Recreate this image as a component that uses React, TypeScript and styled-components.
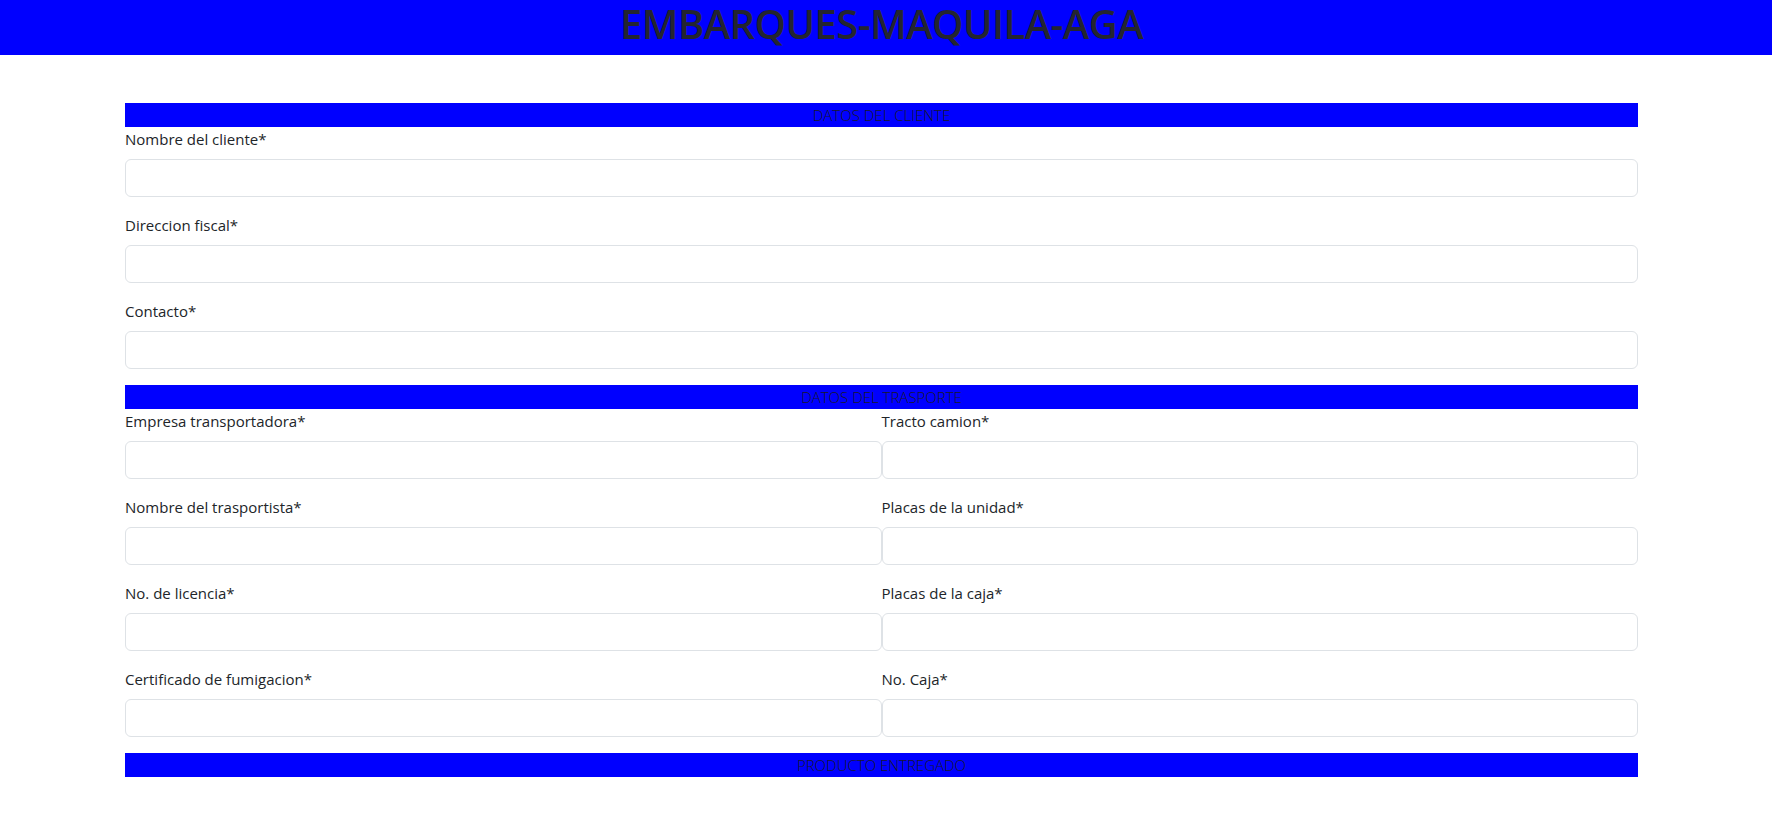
import React from "react";
import styled, { createGlobalStyle } from "styled-components";

const Global = createGlobalStyle`
  html, body { margin: 0; padding: 0; background: #fff; }
  body { font-family: "Open Sans", "Noto Sans", sans-serif; color: #212529; }
  * { box-sizing: border-box; }
`;

const Header = styled.header`
  background: #0000ff;
  padding: 0 134px 7px 125px;
`;

const Title = styled.h1`
  margin: 0;
  font-size: 40px;
  line-height: 48px;
  font-weight: 600;
  letter-spacing: -0.6px;
  text-align: center;
  color: #24252f;
`;

const Main = styled.main`
  padding: 48px 134px 40px 125px;
`;

const SectionBar = styled.div`
  height: 24px;
  background: #0000ff;
  color: #1a1a2a;
  font-size: 15px;
  font-weight: 300;
  line-height: 24px;
  text-align: center;
`;

const Grid = styled.div<{ $cols: number }>`
  display: grid;
  grid-template-columns: repeat(${(p) => p.$cols}, 1fr);
`;

const Field = styled.div`
  display: flex;
  flex-direction: column;
  margin-bottom: 16px;
`;

const Label = styled.label`
  font-size: 15px;
  line-height: 24px;
  margin-bottom: 8px;
  color: #212529;
`;

const Input = styled.input`
  height: 38px;
  width: 100%;
  border: 1px solid #dee2e6;
  border-radius: 6px;
  background: #fff;
  font: inherit;
  padding: 6px 12px;
  outline: none;
`;

const FormField = ({ label }: { label: string }) => (
  <Field>
    <Label>{label}</Label>
    <Input type="text" />
  </Field>
);

export default function App() {
  const transport = [
    "Empresa transportadora*",
    "Tracto camion*",
    "Nombre del trasportista*",
    "Placas de la unidad*",
    "No. de licencia*",
    "Placas de la caja*",
    "Certificado de fumigacion*",
    "No. Caja*",
  ];
  return (
    <>
      <Global />
      <Header>
        <Title>EMBARQUES-MAQUILA-AGA</Title>
      </Header>
      <Main>
        <SectionBar>DATOS DEL CLIENTE</SectionBar>
        <Grid $cols={1}>
          <FormField label="Nombre del cliente*" />
          <FormField label="Direccion fiscal*" />
          <FormField label="Contacto*" />
        </Grid>
        <SectionBar>DATOS DEL TRASPORTE</SectionBar>
        <Grid $cols={2}>
          {transport.map((l) => (
            <FormField key={l} label={l} />
          ))}
        </Grid>
        <SectionBar>PRODUCTO ENTREGADO</SectionBar>
      </Main>
    </>
  );
}
